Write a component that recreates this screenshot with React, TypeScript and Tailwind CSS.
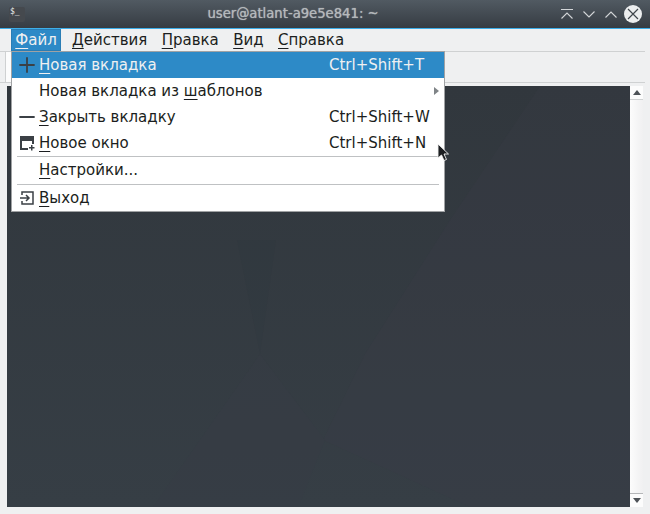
import { Minus, Plus } from "lucide-react";
import type { ReactNode } from "react";

function Accel({ before = "", mark, after }: { before?: string; mark: string; after: string }) {
  return (
    <span>
      {before}
      <span className="underline decoration-1 underline-offset-[3px]">{mark}</span>
      {after}
    </span>
  );
}

function MenuRow({
  icon,
  label,
  shortcut,
  active,
  arrow
}: {
  icon?: ReactNode;
  label: ReactNode;
  shortcut?: string;
  active?: boolean;
  arrow?: boolean;
}) {
  return (
    <div
      className={`flex h-[26px] items-center ${
        active ? "bg-[#2d8ac7] text-[#eff0f1]" : "text-[#1b1e20]"
      }`}
    >
      <div className="flex w-[27px] shrink-0 items-center justify-center pl-[2px]">{icon}</div>
      <div className="flex-1 whitespace-nowrap">{label}</div>
      {shortcut ? <div className="w-[115px] shrink-0 whitespace-nowrap">{shortcut}</div> : null}
      {arrow ? (
        <svg className="mr-[5px]" width="5" height="8" viewBox="0 0 5 8">
          <path d="M0 0 L5 4 L0 8 Z" fill="#7f8487" />
        </svg>
      ) : null}
    </div>
  );
}

function FileMenu() {
  return (
    <div className="absolute left-[11px] top-[51px] z-10 w-[434px] border border-[#a0a2a4] bg-white text-[15px]">
      <MenuRow
        active
        icon={<Plus size={24} strokeWidth={1.8} className="text-[#3b4045]" />}
        label={<Accel mark="Н" after="овая вкладка" />}
        shortcut="Ctrl+Shift+T"
      />
      <MenuRow label={<Accel before="Новая вкладка из " mark="ш" after="аблонов" />} arrow />
      <MenuRow
        icon={<Minus size={24} strokeWidth={1.8} className="text-[#3b4045]" />}
        label={<Accel mark="З" after="акрыть вкладку" />}
        shortcut="Ctrl+Shift+W"
      />
      <MenuRow
        icon={
          <svg width="16" height="16" viewBox="0 0 16 16" fill="none">
            <path d="M1 1 H15 V9 H13 V6 H3 V13 H9 V15 H1 Z" fill="#3b4045" />
            <path d="M12 10 H13.5 V12 H15.5 V13.5 H13.5 V15.5 H12 V13.5 H10 V12 H12 Z" fill="#3b4045" />
          </svg>
        }
        label={<Accel mark="Н" after="овое окно" />}
        shortcut="Ctrl+Shift+N"
      />
      <div className="mx-[5px] h-px bg-[#bfc1c3]" />
      <MenuRow label={<Accel mark="Н" after="астройки..." />} />
      <div className="mx-[5px] mt-px h-px bg-[#bfc1c3]" />
      <MenuRow
        icon={
          <svg width="16" height="16" viewBox="0 0 16 16" fill="none" stroke="#3b4045" strokeWidth="1.5">
            <path d="M3 5 V2 H14 V14 H3 V11" />
            <path d="M1 8 H10 M7 5 L10 8 L7 11" />
          </svg>
        }
        label={<Accel mark="В" after="ыход" />}
      />
    </div>
  );
}

function Cursor() {
  return (
    <svg className="absolute left-[437px] top-[143px] z-20" width="13" height="19" viewBox="0 0 13 19">
      <path d="M1 1 V15 L4.5 12 L7 17.5 L9.5 16.5 L7 11 H11.5 Z" fill="#1d1f22" stroke="#f4f4f4" strokeWidth="0.9" />
    </svg>
  );
}

export default function App() {
  const menus = [
    { mark: "Д", after: "ействия" },
    { mark: "П", after: "равка" },
    { mark: "В", after: "ид" },
    { mark: "С", after: "правка" }
  ];

  return (
    <div className="relative flex h-[514px] w-[650px] flex-col overflow-hidden bg-[#eff0f1] font-['DejaVu_Sans',sans-serif] text-[15px] text-[#1b1e20]">
      <div className="relative flex h-[28px] shrink-0 items-center bg-gradient-to-b from-[#515a62] to-[#363c43] pl-[9px] pr-[8px]">
        <div className="flex h-[15px] w-[16px] items-start rounded-[2px] bg-[#45494e] pl-[1px] font-['DejaVu_Sans_Mono',monospace] text-[8px] leading-[9px] text-[#eff0f1]">
          $_
        </div>
        <div className="flex-1 text-center text-[13.2px] text-[#b4b8bb] [text-shadow:0_0_1px_#b4b8bb]">
          user@atlant-a9e5e841: ~
        </div>
        <div className="flex items-center gap-[10px]">
          <svg width="12" height="10" viewBox="0 0 12 10" fill="none" stroke="#d3d6d8" strokeWidth="1.1">
            <path d="M0 0.5 H12 M0.5 9.5 L6 4 L11.5 9.5" />
          </svg>
          <svg width="12" height="7" viewBox="0 0 12 7" fill="none" stroke="#d3d6d8" strokeWidth="1.1">
            <path d="M0.5 0.5 L6 6 L11.5 0.5" />
          </svg>
          <svg width="12" height="7" viewBox="0 0 12 7" fill="none" stroke="#d3d6d8" strokeWidth="1.1">
            <path d="M0.5 6.5 L6 1 L11.5 6.5" />
          </svg>
          <div className="-ml-[3px] flex h-[18px] w-[18px] items-center justify-center rounded-full bg-[#eceeef]">
            <svg width="12" height="12" viewBox="0 0 12 12" fill="none" stroke="#40464c" strokeWidth="1.2">
              <path d="M1 1 L11 11 M11 1 L1 11" />
            </svg>
          </div>
        </div>
      </div>
      <div className="h-px shrink-0 bg-[#3daee9]" />

      <div className="flex h-[22px] shrink-0 items-center pl-[11px]">
        <div className="flex h-[22px] w-[50px] items-center justify-center border border-[#2a7db5] bg-[#2d8ac7] text-[#eff0f1]">
          <Accel mark="Ф" after="айл" />
        </div>
        <div className="flex items-center gap-[14.4px] pl-[11px]">
          {menus.map((menu) => (
            <Accel key={menu.mark} mark={menu.mark} after={menu.after} />
          ))}
        </div>
      </div>

      <div className="mr-[5px] h-[32px] shrink-0 border-y border-[#cfd1d2] pl-[5px]">
        <div className="h-[30px] w-[40px] border-l border-[#cfd1d2] bg-[#fcfcfc]" />
      </div>

      <div className="flex min-h-0 flex-1 pb-[7px] pl-[7px] pr-[7px] pt-[3px]">
        <div className="relative flex-1 bg-gradient-to-b from-[#31373d] to-[#363e45]">
          {/* faint wallpaper showing through the translucent terminal */}
          <svg className="absolute inset-0 h-full w-full" viewBox="7 86 623 421" preserveAspectRatio="none">
            <path d="M452 217 L540 86 H630 V507 H470 L323 440 L365 354 Z" fill="#3a3a48" opacity="0.25" />
            <path d="M237 240 H276 L260 354 Z" fill="#2a3036" opacity="0.1" />
            <path d="M260 354 L325 440 L285 540 H130 Z" fill="#3a3f48" opacity="0.15" />
          </svg>
        </div>
        <div className="flex w-[13px] flex-col bg-[#fcfcfc]">
          <div className="flex h-[14px] items-center justify-center border-b border-[#cfd1d2]">
            <svg width="8" height="5" viewBox="0 0 8 5">
              <path d="M0 5 L4 0 L8 5 Z" fill="#4d5257" />
            </svg>
          </div>
          <div className="flex-1 bg-gradient-to-r from-[#fcfcfc] to-[#f0f0f1]" />
          <div className="flex h-[14px] items-center justify-center border-t border-[#b5b7b9]">
            <svg width="8" height="5" viewBox="0 0 8 5">
              <path d="M0 0 L8 0 L4 5 Z" fill="#4d5257" />
            </svg>
          </div>
        </div>
      </div>

      <FileMenu />
      <Cursor />
    </div>
  );
}
